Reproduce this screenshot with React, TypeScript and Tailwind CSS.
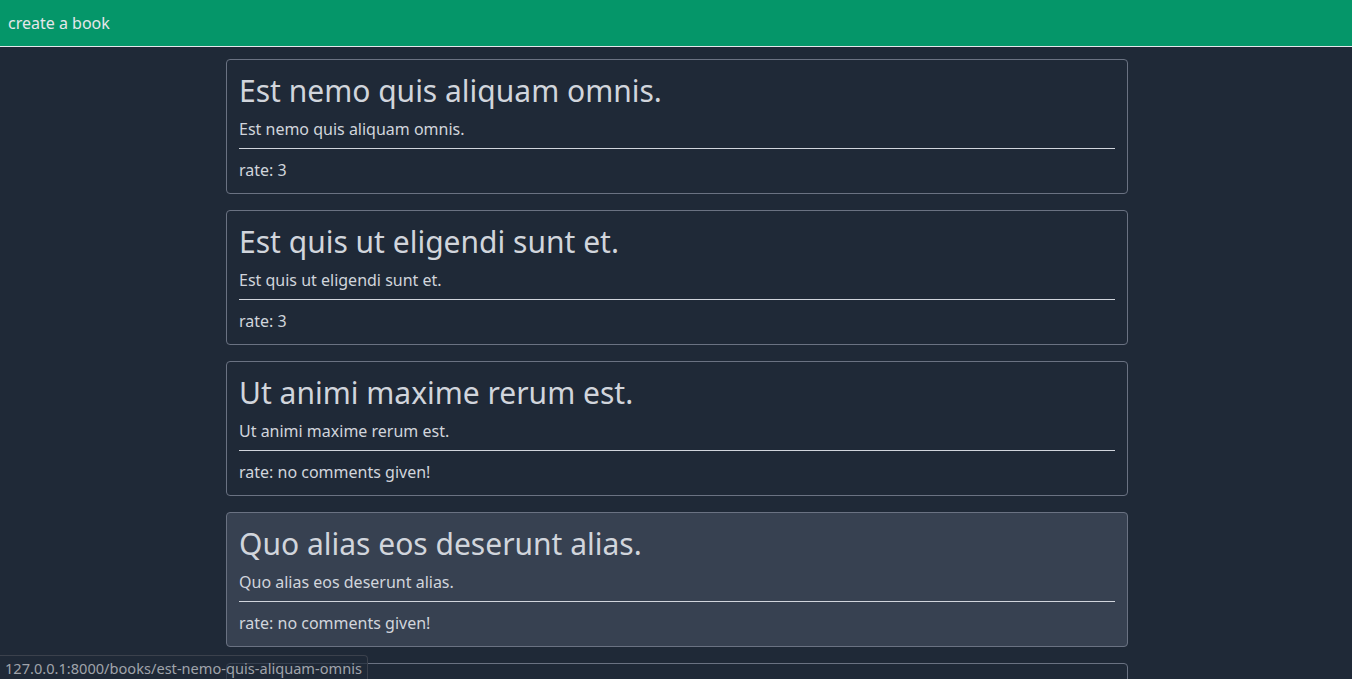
import React from "react";

const books = [
  { title: "Est nemo quis aliquam omnis.", rate: "3" },
  { title: "Est quis ut eligendi sunt et.", rate: "3" },
  { title: "Ut animi maxime rerum est.", rate: "no comments given!" },
  { title: "Quo alias eos deserunt alias.", rate: "no comments given!", hover: true },
  { title: "Et sint voluptas ullam sed.", rate: "4" },
];

export default function App() {
  return (
    <div className="min-h-screen bg-[#1f2937] text-gray-300 relative overflow-hidden h-[679px]" style={{ fontFamily: '"Noto Sans", sans-serif' }}>
      <header className="h-[47px] bg-[#059669] border-b border-gray-200 px-2 flex items-center">
        <a className="text-base text-gray-200 leading-6">create a book</a>
      </header>
      <div className="flex justify-center pl-[2px]">
        <main className="w-[902px] mt-3 flex flex-col gap-4">
          {books.map((b, i) => (
            <div
              key={i}
              className={`border border-gray-500 rounded px-3 pt-[13px] pb-[11px] ${b.hover ? "bg-[#374151]" : "bg-[#1f2937]"}`}
            >
              <h2 className="text-3xl leading-9 text-gray-300">{b.title}</h2>
              <p className="mt-2 text-base leading-6 text-gray-300">{b.title}</p>
              <hr className="mt-[7px] mb-[9px] border-gray-300" />
              <p className="text-base leading-6 text-gray-300">rate: {b.rate}</p>
            </div>
          ))}
        </main>
      </div>
      <div className="absolute left-0 bottom-0 h-[24px] w-[368px] bg-[#1f2937]/70 border-t border-r border-[#3b414c] rounded-tr-[4px] pl-[5px] flex items-center">
        <span className="text-[14.6px] text-[#a0a4ab] leading-5 whitespace-nowrap">127.0.0.1:8000/books/est-nemo-quis-aliquam-omnis</span>
      </div>
    </div>
  );
}
